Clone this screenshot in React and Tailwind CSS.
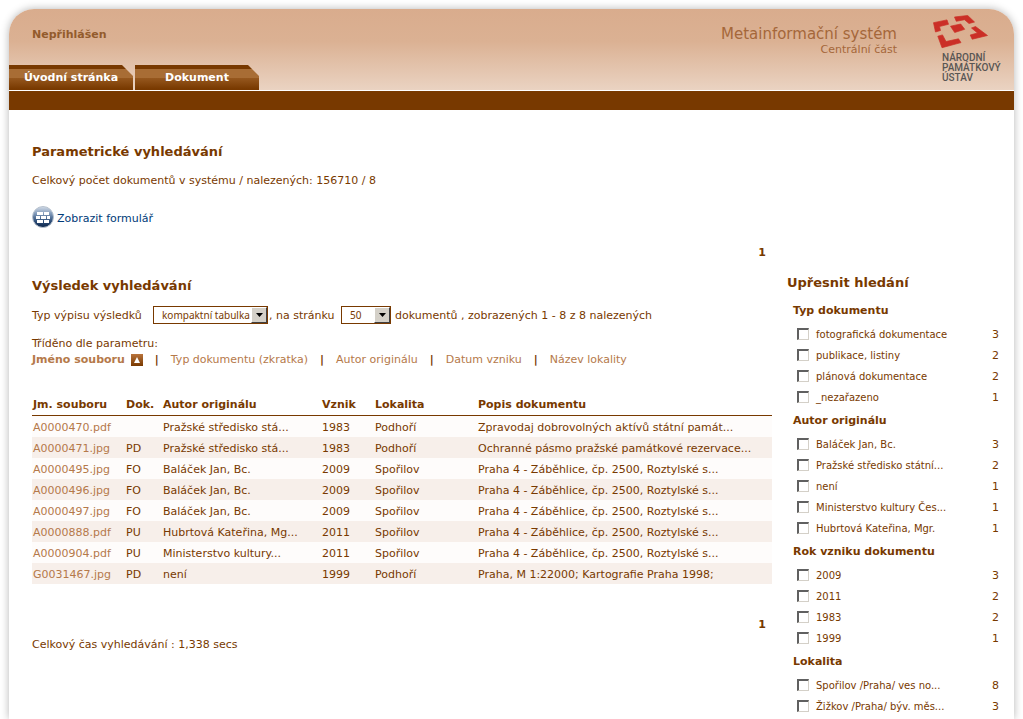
const groups = [
  { title: "Typ dokumentu", items: [["fotografická dokumentace", 3], ["publikace, listiny", 2], ["plánová dokumentace", 2], ["_nezařazeno", 1]] },
  { title: "Autor originálu", items: [["Baláček Jan, Bc.", 3], ["Pražské středisko státní...", 2], ["není", 1], ["Ministerstvo kultury Čes...", 1], ["Hubrtová Kateřina, Mgr.", 1]] },
  { title: "Rok vzniku dokumentu", items: [["2009", 3], ["2011", 2], ["1983", 2], ["1999", 1]] },
  { title: "Lokalita", items: [["Spořilov /Praha/ ves no...", 8], ["Žižkov /Praha/ býv. měs...", 3]] },
];

const columns = ["Jm. souboru", "Dok.", "Autor originálu", "Vznik", "Lokalita", "Popis dokumentu"];

const rows = [
  ["A0000470.pdf", "", "Pražské středisko stá...", "1983", "Podhoří", "Zpravodaj dobrovolných aktívů státní památ..."],
  ["A0000471.jpg", "PD", "Pražské středisko stá...", "1983", "Podhoří", "Ochranné pásmo pražské památkové rezervace..."],
  ["A0000495.jpg", "FO", "Baláček Jan, Bc.", "2009", "Spořilov", "Praha 4 - Záběhlice, čp. 2500, Roztylské s..."],
  ["A0000496.jpg", "FO", "Baláček Jan, Bc.", "2009", "Spořilov", "Praha 4 - Záběhlice, čp. 2500, Roztylské s..."],
  ["A0000497.jpg", "FO", "Baláček Jan, Bc.", "2009", "Spořilov", "Praha 4 - Záběhlice, čp. 2500, Roztylské s..."],
  ["A0000888.pdf", "PU", "Hubrtová Kateřina, Mg...", "2011", "Spořilov", "Praha 4 - Záběhlice, čp. 2500, Roztylské s..."],
  ["A0000904.pdf", "PU", "Ministerstvo kultury...", "2011", "Spořilov", "Praha 4 - Záběhlice, čp. 2500, Roztylské s..."],
  ["G0031467.jpg", "PD", "není", "1999", "Podhoří", "Praha, M 1:22000; Kartografie Praha 1998;"],
];

function Tab({ children }) {
  return (
    <a
      href="#"
      className="flex h-[25px] w-[124px] items-center justify-center bg-[linear-gradient(#783900_0_4px,#a86d35_4px_13px,#96581f_13px,#783900_24px)] pt-[2px] text-[11px] font-bold text-white [clip-path:polygon(0_0,113px_0,100%_11px,100%_100%,0_100%)]"
    >
      {children}
    </a>
  );
}

function Logo() {
  return (
    <div className="w-[68px] pt-[6px] text-[#595654]">
      <svg viewBox="0 0 56 34" className="block h-[34px] w-[56px]" fill="#cb2f27" stroke="#cb2f27" strokeWidth="0.7" aria-hidden="true">
        <path d="M0.5 7.7 14 4.900 15.500 9.300 6.500 11.500 7.500 15.500 2.500 17Z" />
        <path d="M21.500 2 34.700 0.500 41.500 7 36 8.500 31.500 4.700 23.300 6.300Z" />
        <path d="M17.500 11.200 27.700 9 31.700 14.300 21.700 17.500Z" />
        <path d="M42.500 11.500 54.500 20.500 39.200 24.200 37.200 20 44.500 18 38.500 13Z" />
        <path d="M4.800 21.200 9.500 19.900 13 26.500 25.500 23.800 28 27.600 9 32.700Z" />
      </svg>
      <div className="pt-[4px] pl-[9px] font-['Roboto',sans-serif] text-[10px] leading-[10px] font-medium">
        <div>NÁRODNÍ</div>
        <div>PAMÁTKOVÝ</div>
        <div>ÚSTAV</div>
      </div>
    </div>
  );
}

function Dropdown({ label, width, options }) {
  return (
    <span className={"relative inline-flex h-[18px] " + width}>
      <select aria-label={label} className="h-full w-full appearance-none border border-[#783900] bg-white pl-[8px] font-['Noto_Sans',sans-serif] text-[10px] text-[#783900]">
        {options.map((o) => <option key={o}>{o}</option>)}
      </select>
      <span className="pointer-events-none absolute top-[1px] right-[1px] flex h-4 w-4 items-center justify-center border border-t-white border-r-[#404040] border-b-[#404040] border-l-white bg-[#d4d0c8]">
        <svg viewBox="0 0 7 4" className="h-1 w-[7px]" aria-hidden="true"><path d="M0 0H7L3.5 4Z" /></svg>
      </span>
    </span>
  );
}

export default function App() {
  return (
    <div className="flex min-h-screen flex-col bg-white px-[9px] pt-[9px] font-['DejaVu_Sans',Verdana,sans-serif] text-[11px] text-[#783900]">
      <div className="flex-1 rounded-t-[25px] shadow-[0_0_8px_#b4b4b4]">
        <header className="flex h-[82px] justify-between rounded-t-[25px] border-b border-white bg-[linear-gradient(#d9ac8d,#dbb193_40%,#ead3c2)]">
          <div className="flex flex-col justify-between">
            <div className="pt-[18px] pl-[23px] leading-4 font-bold text-[#935b2c]">Nepřihlášen</div>
            <nav className="flex gap-[2px]">
              <Tab>Úvodní stránka</Tab>
              <Tab>Dokument</Tab>
            </nav>
          </div>
          <div className="flex gap-[36px] pr-[13px]">
            <div className="pt-[16px] text-right text-[#a5673a]">
              <div className="text-[15px] leading-[18px]">Metainformační systém</div>
              <div className="text-[11px] leading-[13px]">Centrální část</div>
            </div>
            <Logo />
          </div>
        </header>
        <div className="h-[19px] bg-[#783900]" />

        <div className="flex gap-[15px] pr-[15px] pl-[23px]">
          <main className="min-w-0 flex-1 pt-8">
            <h1 className="text-[13px] leading-5 font-bold">Parametrické vyhledávání</h1>
            <p className="mt-[11px] leading-4">Celkový počet dokumentů v systému / nalezených: 156710 / 8</p>
            <a href="#" className="mt-[17px] flex h-[22px] items-center gap-[3px] text-[#003b78]">
              <svg viewBox="0 0 22 22" className="h-[22px] w-[22px]" aria-hidden="true">
                <defs>
                  <linearGradient id="ball" x1="0" y1="0" x2="0" y2="1">
                    <stop offset="0" stopColor="#d3dce8" />
                    <stop offset="0.35" stopColor="#7f98b8" />
                    <stop offset="0.7" stopColor="#2f4f7a" />
                    <stop offset="1" stopColor="#0a2348" />
                  </linearGradient>
                </defs>
                <circle cx="11" cy="11" r="10.500" fill="url(#ball)" stroke="#b8c2ce" />
                <path fill="#fff" d="M5 6h6v3H5zM12 6h5v3h-5zM4 10h4v3H4zM9 10h5v3H9zM15 10h3v3h-3zM5 14h6v3H5zM12 14h5v3h-5z" />
              </svg>
              <span className="pt-[4px]">Zobrazit formulář</span>
            </a>
            <div className="mt-[17px] pr-[6px] text-right leading-4 font-bold">1</div>

            <h2 className="mt-[15px] text-[13px] leading-5 font-bold">Výsledek vyhledávání</h2>
            <div className="mt-[10px] flex h-[18px] items-center">
              <span className="w-[121px] pt-[2px]">Typ výpisu výsledků</span>
              <Dropdown label="Typ výpisu výsledků" width="w-[115px]" options={["kompaktní tabulka"]} />
              <span className="w-[73px] pt-[2px] pl-px">, na stránku</span>
              <Dropdown label="Počet na stránku" width="w-[50px]" options={["50"]} />
              <span className="pt-[2px] pl-1">dokumentů , zobrazených 1 - 8 z 8 nalezených</span>
            </div>
            <div className="mt-[12px] leading-4">Tříděno dle parametru:</div>
            <div className="flex items-center leading-[15px] text-[#b5794a]">
              <a href="#" className="flex items-center gap-[6px] font-bold">
                Jméno souboru
                <svg viewBox="0 0 12 12" className="h-3 w-3" aria-hidden="true">
                  <defs>
                    <linearGradient id="sort" x1="0" y1="0" x2="0" y2="1">
                      <stop offset="0" stopColor="#b9743c" />
                      <stop offset="1" stopColor="#783900" />
                    </linearGradient>
                  </defs>
                  <rect width="12" height="12" fill="url(#sort)" />
                  <path d="M6 3 9 9H3Z" fill="#fff" />
                </svg>
              </a>
              {["Typ dokumentu (zkratka)", "Autor originálu", "Datum vzniku", "Název lokality"].map((s) => (
                <span key={s} className="flex"><b className="w-[28px] text-center text-[#783900]">|</b><a href="#">{s}</a></span>
              ))}
            </div>

            <table className="mt-[28px] w-full table-fixed border-collapse text-left">
              <colgroup>
                <col className="w-[93px]" /><col className="w-[37px]" /><col className="w-[159px]" /><col className="w-[53px]" /><col className="w-[103px]" /><col />
              </colgroup>
              <thead>
                <tr className="h-[20px] border-b border-[#783900]">
                  {columns.map((c) => <th key={c} className="p-0 pl-px leading-[18px] whitespace-nowrap">{c}</th>)}
                </tr>
              </thead>
              <tbody>
                {rows.map((r) => (
                  <tr key={r[0]} className="h-[21px] odd:bg-[#fefcfb] even:bg-[#f7efea]">
                    {r.map((c, i) => (
                      <td key={i} className="p-0 pt-[3px] pl-px leading-[18px] whitespace-nowrap">{i === 0 ? <a href="#" className="text-[#b5794a]">{c}</a> : c}</td>
                    ))}
                  </tr>
                ))}
              </tbody>
            </table>
            <div className="mt-[33px] pr-[6px] text-right leading-4 font-bold">1</div>
            <p className="mt-1 leading-4">Celkový čas vyhledávání : 1,338 secs</p>
          </main>

          <aside className="w-[212px] shrink-0 pt-[163px]">
            <h2 className="text-[13px] leading-5 font-bold">Upřesnit hledání</h2>
            <div className="pt-[5px] pl-[6px]">
              {groups.map((g) => (
                <section key={g.title}>
                  <h3 className="leading-[26px] font-bold">{g.title}</h3>
                  {g.items.map(([name, count]) => (
                    <label key={name} className="flex h-[21px] items-center pl-1">
                      <input type="checkbox" className="mb-px h-3 w-3 appearance-none border-t-2 border-r border-b border-l-2 border-t-[#606060] border-r-[#d4d0c8] border-b-[#d4d0c8] border-l-[#606060] bg-white" />
                      <span className="flex-1 pl-[7px] text-[10px]">{name}</span>
                      <span className="pt-[2px]">{count}</span>
                    </label>
                  ))}
                </section>
              ))}
            </div>
          </aside>
        </div>
      </div>
    </div>
  );
}
